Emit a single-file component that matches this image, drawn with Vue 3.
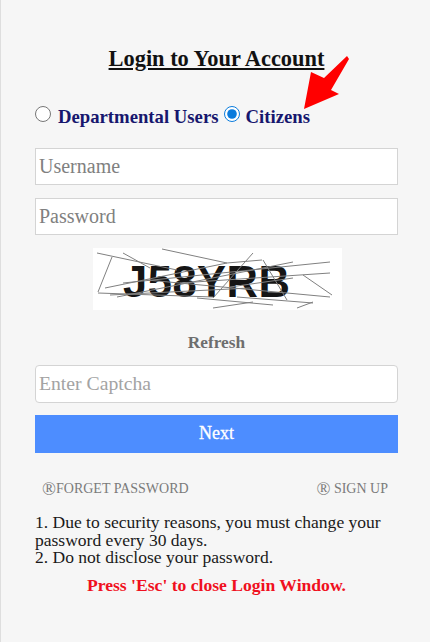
<script setup>
const lines = [
  [97,253,177,270],[123,253,150,268],[162,249,227,263],[112,257,98,292],[98,293,213,297],[105,288,227,263],
  [117,297,293,262],[253,253,213,298],[123,283,330,262],[147,280,330,297],[180,283,330,273],[303,275,332,295],
  [213,308,253,302],[297,308,313,302],[197,298,273,305],[237,297,313,303],[263,260,287,300],[230,287,293,278],
  [110,295,250,288],[227,263,262,260]
]
</script>

<template>
  <main class="page">
    <svg class="arrow" width="60" height="64" viewBox="0 0 60 64" aria-hidden="true">
      <polygon points="12,17 25,23 48,1 50,4 32,35 40,39 5,54" fill="#ff0000" />
    </svg>
    <h1 class="title">Login to Your Account</h1>
    <div class="roles">
      <input class="radio" type="radio" name="role" id="dept" />
      <label class="role" for="dept">Departmental Users</label>
      <input class="radio" type="radio" name="role" id="cit" checked />
      <label class="role citizens" for="cit">Citizens</label>
    </div>
    <input class="field" type="text" placeholder="Username" />
    <input class="field" type="password" placeholder="Password" />
    <div class="captcha">
      <svg width="249" height="62" viewBox="93 248 249 62" role="img">
        <rect x="93" y="248" width="249" height="62" fill="#fff" />
        <text x="123" y="297" class="code">J58YRB</text>
        <line v-for="(l, i) in lines" :key="i" :x1="l[0]" :y1="l[1]" :x2="l[2]" :y2="l[3]" stroke="#808080" stroke-width="1" />
      </svg>
    </div>
    <div class="refresh">Refresh</div>
    <input class="field rounded" type="text" placeholder="Enter Captcha" />
    <button class="next" type="button">Next</button>
    <div class="links">
      <a class="link"><span class="reg">®</span>FORGET PASSWORD</a>
      <a class="link"><span class="reg">®</span> SIGN UP</a>
    </div>
    <p class="notes">1. Due to security reasons, you must change your password every 30 days.<br />2. Do not disclose your password.</p>
    <p class="esc">Press 'Esc' to close Login Window.</p>
  </main>
</template>

<style scoped>
.page {
  position: relative;
  box-sizing: border-box;
  width: 430px;
  height: 642px;
  padding: 45px 32px 0 34px;
  background: #f6f6f6;
  border-left: 1px solid #dedede;
  font-family: "Liberation Serif", serif;
  overflow: hidden;
}
.arrow {
  position: absolute;
  left: 298px;
  top: 55px;
}
.title {
  margin: 0;
  text-align: center;
  font-size: 22.4px;
  line-height: 27px;
  font-weight: 700;
  color: #111;
  text-decoration: underline;
}
.roles {
  display: flex;
  align-items: center;
  margin-top: 30px;
  height: 26px;
}
.radio {
  width: 16px;
  height: 16px;
  margin: -3px 0 0;
  accent-color: #0a7bdc;
}
.role {
  margin: 3px 5px 0 7px;
  font-size: 18.72px;
  font-weight: 700;
  color: #17176e;
}
.citizens { margin-left: 6px; }
.field {
  display: block;
  box-sizing: border-box;
  width: 363px;
  height: 37px;
  margin-top: 13px;
  padding: 0 3px;
  background: #fff;
  border: 1px solid #d4d4d4;
  border-radius: 0;
  outline: none;
  font-family: inherit;
  font-size: 20px;
}
.roles + .field { margin-top: 20px; }
.field::placeholder { color: #808080; opacity: 1; }
.rounded {
  height: 38px;
  margin-top: 12px;
  padding-bottom: 2px;
  border-radius: 4px;
  font-size: 19.7px;
}
.rounded::placeholder { color: #a3a3a3; }
.captcha {
  display: flex;
  justify-content: center;
  margin-top: 13px;
  height: 62px;
  padding-left: 1px;
}
.captcha svg { display: block; }
.code {
  font-family: "Liberation Sans", sans-serif;
  font-size: 43.5px;
  font-weight: 700;
  letter-spacing: 0.5px;
  fill: #151515;
}
.refresh {
  margin-top: 23px;
  text-align: center;
  font-size: 17.3px;
  line-height: 20px;
  font-weight: 700;
  color: #6e6e6e;
}
.next {
  display: block;
  width: 363px;
  height: 38px;
  margin-top: 12px;
  padding: 0 0 1px;
  border: 0;
  background: #4d8dff;
  color: #fff;
  font-family: inherit;
  font-size: 18px;
  font-weight: 400;
  -webkit-text-stroke: 0.3px #fff;
}
.links {
  display: flex;
  justify-content: space-between;
  height: 20px;
  margin-top: 26px;
  padding: 0 10px 0 7px;
  font-size: 14px;
  line-height: 20px;
  color: #7b7b7b;
}
.link { white-space: pre; }
.reg {
  font-size: 18.4px;
  line-height: 14px;
  vertical-align: -2px;
}
.notes {
  margin: 15px 0 0;
  font-size: 17.55px;
  line-height: 17.6px;
  color: #1a1a1a;
}
.esc {
  margin: 8px 0 0;
  text-align: center;
  font-size: 17.6px;
  line-height: 20px;
  font-weight: 700;
  color: #f01020;
}
</style>
